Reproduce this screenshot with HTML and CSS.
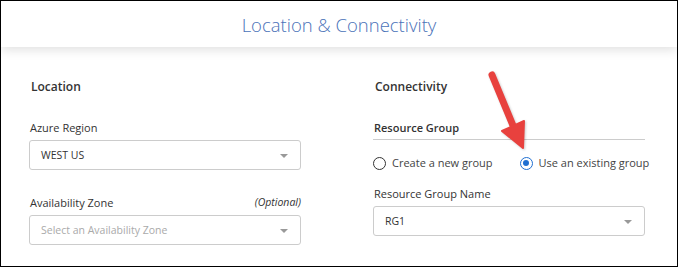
FILE: index.html
```html
<!DOCTYPE html>
<html lang="en">
<head>
    <meta charset="UTF-8">
    <title>Location &amp; Connectivity</title>
    <link rel="stylesheet" href="styles.css">
</head>
<body>
    <div class="frame">
        <header class="header">
            <h1>Location &amp; Connectivity</h1>
        </header>
        <div class="content">
            <section class="column">
                <h2>Location</h2>
                <label class="field-label">Azure Region</label>
                <div class="select">
                    <span>WEST US</span>
                    <span class="caret"></span>
                </div>
                <div class="field-label split">
                    <span>Availability Zone</span>
                    <em>(Optional)</em>
                </div>
                <div class="select">
                    <span class="placeholder">Select an Availability Zone</span>
                    <span class="caret"></span>
                </div>
            </section>
            <section class="column">
                <h2>Connectivity</h2>
                <div class="group-title">Resource Group</div>
                <div class="radios">
                    <label class="radio"><span class="dot"></span>Create a new group</label>
                    <label class="radio checked"><span class="dot"></span>Use an existing group</label>
                </div>
                <label class="field-label">Resource Group Name</label>
                <div class="select">
                    <span>RG1</span>
                    <span class="caret"></span>
                </div>
            </section>
        </div>
        <svg class="arrow" width="678" height="267" viewBox="0 0 678 267">
            <line x1="492" y1="75" x2="514" y2="128" stroke="#e8413e" stroke-width="7" stroke-linecap="round"/>
            <polygon points="502,131 524,121 523,148" fill="#e8413e" stroke="#e8413e" stroke-width="2" stroke-linejoin="round"/>
        </svg>
    </div>
</body>
</html>
```
FILE: styles.css
```css
body {
    margin: 0;
    font-family: "Open Sans", Arial, sans-serif;
    color: #333;
}
.frame {
    position: relative;
    width: 676px;
    height: 265px;
    border: 1px solid #000;
    background: #fff;
    overflow: hidden;
}
.header {
    height: 46px;
    display: flex;
    align-items: center;
    justify-content: center;
    background: #fff;
    box-shadow: 0 3px 10px rgba(0, 0, 0, 0.12);
    position: relative;
    z-index: 1;
}
h1 {
    margin: 0;
    font-size: 18.5px;
    font-weight: 300;
    color: #4a72b8;
}
.content {
    display: flex;
    gap: 72px;
    padding: 30px 0 0 28px;
}
.column {
    width: 272px;
    display: flex;
    flex-direction: column;
}
h2 {
    margin: 0 0 22px 2px;
    font-size: 12px;
    font-weight: 600;
    color: #333;
    line-height: 20px;
}
.field-label {
    display: block;
    font-size: 11px;
    line-height: 17px;
    margin: 0 0 4px 1px;
    color: #333;
}
.split {
    display: flex;
    justify-content: space-between;
}
.split em {
    font-size: 10.5px;
}
.select {
    height: 28px;
    border: 1px solid #ccc;
    border-radius: 3px;
    display: flex;
    align-items: center;
    justify-content: space-between;
    padding: 0 12px 0 11px;
    font-size: 10.5px;
    margin-bottom: 24px;
}
.placeholder {
    color: #aaa;
}
.caret {
    width: 0;
    height: 0;
    border-left: 4px solid transparent;
    border-right: 4px solid transparent;
    border-top: 4px solid #999;
    margin-top: 2px;
}
.group-title {
    font-size: 11px;
    font-weight: 600;
    line-height: 17px;
    padding: 0 0 3px 1px;
    border-bottom: 1px solid #ccc;
    margin-bottom: 13px;
}
.radios {
    display: flex;
    gap: 27px;
    margin-bottom: 12px;
}
.radio {
    display: flex;
    align-items: center;
    gap: 6px;
    font-size: 11px;
    line-height: 20px;
    color: #444;
    white-space: nowrap;
}
.dot {
    flex-shrink: 0;
    width: 11px;
    height: 11px;
    border: 1.5px solid #333;
    border-radius: 50%;
    box-sizing: content-box;
    position: relative;
}
.checked .dot {
    border-color: #1f6fd1;
}
.checked .dot::after {
    content: "";
    position: absolute;
    left: 2.5px;
    top: 2.5px;
    width: 6px;
    height: 6px;
    border-radius: 50%;
    background: #1f6fd1;
}
.arrow {
    position: absolute;
    left: -1px;
    top: -1px;
    z-index: 2;
    filter: drop-shadow(1px 1px 1px rgba(0, 0, 0, 0.2));
}
```
